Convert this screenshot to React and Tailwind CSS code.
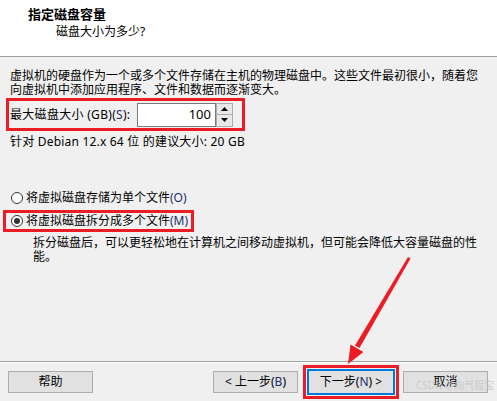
import React from "react";

const font = { fontFamily: '"Noto Sans", "Noto Sans CJK SC", sans-serif' };

function Radio({ checked }) {
  return (
    <span className="flex h-[12px] w-[12px] shrink-0 items-center justify-center rounded-full border border-[#333333] bg-white">
      {checked && <span className="h-[6px] w-[6px] rounded-full bg-[#333333]" />}
    </span>
  );
}

function Spinner() {
  return (
    <div className="flex h-[24px] w-[17px] flex-col">
      <div className="flex h-[12px] items-center justify-center border border-[#adadad] bg-[#e8e8e8]">
        <svg width="7" height="4" viewBox="0 0 7 4"><path d="M0 4 L3.5 0 L7 4 Z" fill="#000" /></svg>
      </div>
      <div className="flex h-[12px] items-center justify-center border border-t-0 border-[#adadad] bg-[#e8e8e8]">
        <svg width="7" height="4" viewBox="0 0 7 4"><path d="M0 0 L7 0 L3.5 4 Z" fill="#000" /></svg>
      </div>
    </div>
  );
}

function WinButton({ children, className = "" }) {
  return (
    <button
      type="button"
      className={`flex h-[22px] w-[85px] items-center justify-center border border-[#adadad] bg-[#e1e1e1] text-[12px] leading-none text-black ${className}`}
    >
      {children}
    </button>
  );
}

export default function App() {
  return (
    <div className="relative flex h-[401px] w-[497px] flex-col overflow-hidden bg-[#f0f0f0] text-black" style={font}>
      {/* header */}
      <div className="h-[57px] border-b border-[#a0a0a0] bg-white pt-[5px]">
        <div className="pl-[28px] text-[13px] font-bold leading-[18px]">指定磁盘容量</div>
        <div className="pl-[56px] text-[12px] leading-[18px]">磁盘大小为多少?</div>
      </div>

      {/* body */}
      <div className="flex flex-1 flex-col px-[10px] pt-[12px] text-[12px]">
        <div className="whitespace-nowrap leading-[14px]">
          <div>虚拟机的硬盘作为一个或多个文件存储在主机的物理磁盘中。这些文件最初很小，随着您</div>
          <div>向虚拟机中添加应用程序、文件和数据而逐渐变大。</div>
        </div>

        <div className="ml-[-4px] mt-[1px] flex h-[33px] w-[239px] items-center border-[3px] border-[#ec1c24] pl-[1px]">
          <span className="w-[127px] whitespace-nowrap leading-none tracking-[0.3px]">
            最大磁盘大小 (GB)(<span className="text-[#1c2d6b]">S</span>):
          </span>
          <div className="flex h-[24px] w-[79px] items-center justify-end border border-[#7a7a7a] bg-white pr-[4px] text-[13px]">
            100
          </div>
          <Spinner />
        </div>

        <p className="mt-[4px] leading-[14px] tracking-[0.2px]">针对 Debian 12.x 64 位 的建议大小: 20 GB</p>

        <label className="mt-[40px] flex h-[18px] items-center gap-[3px] pl-[1px]">
          <Radio />
          <span className="whitespace-nowrap leading-none">
            将虚拟磁盘存储为单个文件<span className="text-[#1c2d6b]">(O)</span>
          </span>
        </label>

        <div className="ml-[-7px] mt-[3px] flex h-[22px] w-[191px] items-center gap-[3px] border-[3px] border-[#ec1c24] pl-[5px]">
          <Radio checked />
          <span className="whitespace-nowrap leading-none">
            将虚拟磁盘拆分成多个文件<span className="text-[#1c2d6b]">(M)</span>
          </span>
        </div>

        <div className="mt-[4px] whitespace-nowrap pl-[23px] leading-[14px]">
          <div>拆分磁盘后，可以更轻松地在计算机之间移动虚拟机，但可能会降低大容量磁盘的性</div>
          <div>能。</div>
        </div>
      </div>

      {/* footer */}
      <div className="border-t border-[#a0a0a0]">
        <div className="flex h-[39px] items-center border-t border-white pr-[9px] pl-[8px]">
          <WinButton>帮助</WinButton>
          <WinButton className="ml-auto">
            &lt; 上一步(<span className="text-[#1c2d6b]">B</span>)
          </WinButton>
          <div className="ml-[5px] border-[3px] border-[#ec1c24] p-[1px]">
            <button
              type="button"
              className="flex h-[26px] w-[88px] items-center justify-center border-2 border-[#0078d7] bg-[#e1e1e1] text-[12px] leading-none"
            >
              下一步(<span className="text-[#1c2d6b]">N</span>) &gt;
            </button>
          </div>
          <WinButton className="ml-[4px]">取消</WinButton>
        </div>
      </div>

      {/* watermark */}
      <span className="pointer-events-none absolute left-[416px] top-[378px] whitespace-nowrap text-[10px] text-[#c8c8c8] opacity-80">
        CSDN @向气程宝
      </span>

      {/* annotation arrow */}
      <svg className="pointer-events-none absolute left-0 top-0" width="497" height="401" viewBox="0 0 497 401">
        <path d="M408 257 L410.5 258.5 L359.5 348 L355 345.5 Z" fill="#ec1c24" />
        <path d="M348 364 L350.5 344.5 L363.5 352 Z" fill="#ec1c24" />
      </svg>
    </div>
  );
}
